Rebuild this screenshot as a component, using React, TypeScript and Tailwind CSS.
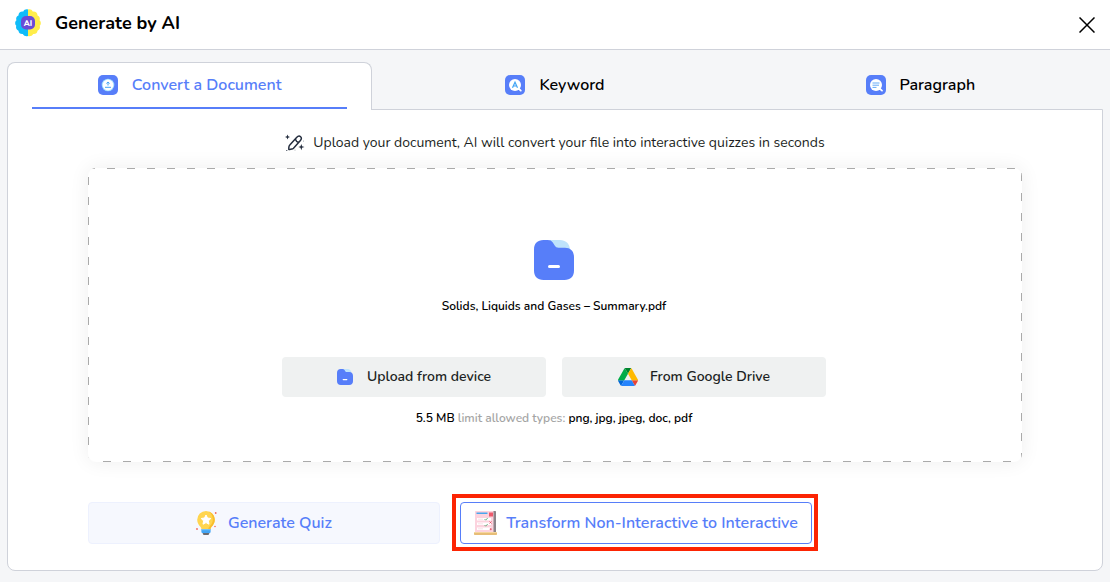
import { useState } from 'react'
import type { ReactNode } from 'react'

type IconProps = {
  className?: string
}

function BrainIcon() {
  return (
    <svg viewBox="0 0 26 28" className="h-7 w-[26px]" aria-hidden="true">
      <path
        d="M13 .5C11 0 9 .7 8.300 2.500 5.500 2 3.300 4 3.500 6.500 1.500 7.300.600 9.300 1.500 11.300-.300 12.800-.200 15.500 1.300 16.800.500 19 1.500 21 3.500 21.700 3.700 24 5.500 25.300 7.800 25 9 27 11 27.700 13 27z"
        fill="#0fbcf9"
      />
      <path
        d="M13 .5c2-.5 4 .2 4.700 2 2.800-.5 5 1.500 4.800 4 2 .8 2.900 2.800 2 4.800 1.800 1.500 1.700 4.200.2 5.500.8 2.200-.2 4.200-2.200 4.900-.2 2.300-2 3.600-4.300 3.300-1.200 2-3.200 2.700-5.200 2z"
        fill="#ffed4a"
      />
      <rect x="6" y="7" width="14" height="13.500" rx="5" fill="#6a4bd6" />
      <text
        x="13"
        y="17"
        textAnchor="middle"
        fontSize="8"
        fontWeight="800"
        fill="#fff"
        fontFamily="Nunito, Open Sans, sans-serif"
      >
        AI
      </text>
    </svg>
  )
}

function UploadBadge() {
  return (
    <svg viewBox="0 0 20 20" className="size-5" aria-hidden="true">
      <rect width="20" height="20" rx="5" fill="#577ef9" />
      <circle cx="10" cy="10" r="6.300" fill="#9edcff" />
      <circle cx="10" cy="10" r="5.400" fill="#fff" />
      <path
        d="M10 10.500V7.200M8.400 8.500 10 7l1.600 1.500M7 12.300h6"
        stroke="#43a4f5"
        strokeWidth="1"
        fill="none"
      />
    </svg>
  )
}

function KeywordBadge() {
  return (
    <svg viewBox="0 0 20 20" className="size-5" aria-hidden="true">
      <rect width="20" height="20" rx="5" fill="#577ef9" />
      <path d="m13 13 2.800 2.600" stroke="#fff" strokeWidth="1.800" strokeLinecap="round" />
      <circle cx="10" cy="10" r="6" fill="#fff" />
      <path
        d="M7.500 12.800 10 7.200l2.500 5.600M8.400 11h3.200"
        stroke="#43a4f5"
        strokeWidth="1.200"
        fill="none"
      />
    </svg>
  )
}

function ParagraphBadge() {
  return (
    <svg viewBox="0 0 20 20" className="size-5" aria-hidden="true">
      <rect width="20" height="20" rx="5" fill="#577ef9" />
      <path d="m13 13 3 2.600" stroke="#fff" strokeWidth="1.800" strokeLinecap="round" />
      <circle cx="10" cy="10" r="6" fill="#fff" />
      <path d="M6.500 8h7M6.500 10.200h6.500M6.500 12.400h4" stroke="#65a9f7" strokeWidth="1" />
    </svg>
  )
}

function MagicPenIcon() {
  return (
    <svg viewBox="0 0 20 18" className="h-[18px] w-5" fill="none" aria-hidden="true">
      <path
        d="m4.800 11 6.800-7.500c1.700-1.900 3.100-1.600 4-.8s1.300 2.200-.4 4.100L8.500 14.200c-.5.500-1 .8-1.700.9l-2.200.5c-.6.100-1-.3-.9-.9l.3-2.200c.1-.6.400-1.100.8-1.500zM10.500 5c.3 2 1.600 3.200 3.400 3.500"
        stroke="#232c3d"
        strokeWidth="1.500"
      />
      <path
        d="M2.500.5 3.200 2.300 5 3l-1.800.700L2.500 5.500l-.7-1.800L0 3l1.800-.7zM16.300 10l.8 2.200 2.400.8-2.400.8-.8 2.400-.8-2.400-2.200-.8 2.200-.8z"
        fill="#232c3d"
      />
      <circle cx="1.800" cy="16.500" r=".6" fill="#232c3d" />
      <circle cx="18.500" cy="7" r=".5" fill="#8c929c" />
      <circle cx="10" cy="16" r=".5" fill="#8c929c" />
    </svg>
  )
}

function FolderIcon({ className }: IconProps) {
  return (
    <svg viewBox="0 0 40 40" className={className} aria-hidden="true">
      <path d="M15 0h11c5.500 0 9.500 3.500 10 9.500L20 12z" fill="#bfe3fb" />
      <path
        d="M0 9.500C0 3.500 3.500 0 9.500 0h4.300c2.300 0 3.800.8 5 2.600l1.900 3c1 1.600 2 2.200 3.800 2.200H31c5.500 0 9 3.500 9 9.200v13.500c0 6-3.500 9.500-9.500 9.500h-21C3.500 40 0 36.500 0 30.500z"
        fill="#577ef9"
      />
      <rect x="14" y="25" width="12" height="3" rx="1.500" fill="#fff" />
    </svg>
  )
}

function DriveIcon() {
  return (
    <svg viewBox="0 0 87.3 78" className="h-[18px] w-5" aria-hidden="true">
      <path
        d="m6.600 66.850 3.850 6.650c.8 1.400 1.950 2.500 3.300 3.300l13.750-23.800H0c0 1.550.4 3.100 1.200 4.500z"
        fill="#0066da"
      />
      <path
        d="M43.650 25 29.900 1.200c-1.350.8-2.500 1.900-3.300 3.300L1.200 48.500C.4 49.900 0 51.450 0 53h27.500z"
        fill="#00ac47"
      />
      <path
        d="M73.550 76.800c1.350-.8 2.500-1.900 3.300-3.300l1.600-2.750 7.650-13.250c.8-1.400 1.200-2.950 1.200-4.500H59.800l5.850 11.500z"
        fill="#ea4335"
      />
      <path
        d="M43.650 25 57.400 1.200C56.050.4 54.500 0 52.900 0H34.400c-1.600 0-3.150.45-4.500 1.200z"
        fill="#00832d"
      />
      <path
        d="M59.800 53H27.500L13.750 76.800c1.350.8 2.900 1.200 4.500 1.200h50.800c1.600 0 3.150-.45 4.500-1.200z"
        fill="#2684fc"
      />
      <path
        d="M73.400 26.500 60.700 4.500c-.8-1.400-1.950-2.500-3.300-3.300L43.650 25 59.800 53h27.450c0-1.550-.4-3.100-1.200-4.500z"
        fill="#ffba00"
      />
    </svg>
  )
}

function BulbIcon() {
  return (
    <svg viewBox="0 0 22 24" className="h-6 w-[22px]" aria-hidden="true">
      <path
        d="M10 0a8.800 8.800 0 0 0-8.800 8.800c0 3.400 1.700 5.200 3.200 7 .8.900 1 1.700 1 2.700h9.200c0-1 .2-1.800 1-2.700 1.500-1.800 3.200-3.600 3.200-7A8.800 8.800 0 0 0 10 0z"
        fill="#ffd54f"
      />
      <path
        d="M12.500.4c4 1.200 6.300 4.500 6.300 8.400 0 3.400-1.700 5.200-3.200 7-.8.900-1 1.700-1 2.700h-2.400c0-3 4.600-4.700 4.600-9.700 0-3.700-1.500-6.500-4.300-8.400z"
        fill="#f9bd2e"
      />
      <path
        d="m10 4 1.500 3 3.300.5-2.400 2.400.6 3.300-3-1.600-3 1.600.6-3.300-2.400-2.400 3.300-.5z"
        fill="#fff"
        stroke="#fff"
        strokeLinejoin="round"
      />
      <path d="M5.400 18.200h9.200v2.500c0 .8-.5 1.300-1.300 1.300H6.700c-.8 0-1.300-.5-1.300-1.300z" fill="#42a5f5" />
      <path d="M5.400 18.200h9.200v1H5.400z" fill="#7cc4fb" />
      <path d="M6.500 22h7l-1 2h-5z" fill="#6b6b70" />
      <circle cx="19.700" cy="2" r=".9" fill="#f4685c" />
      <circle cx="19" cy="15.500" r=".8" fill="#f4685c" />
      <circle cx="1" cy="18" r=".9" fill="#f4685c" />
    </svg>
  )
}

function WorksheetIcon() {
  return (
    <svg viewBox="0 0 24 24" className="size-6" aria-hidden="true">
      <path d="M19 0h2c.6 0 1 .4 1 1v20h-3z" fill="#8c8389" />
      <path d="M1 1c0-.6.400-1 1-1h17.500v21H1z" fill="#fcd3de" />
      <path d="M2.500 1.500h11V3h-11z" fill="#48a6ee" />
      <rect x="15" y="1.500" width="4" height="4" fill="#ee5a6c" />
      <path d="M3 7h14v2.500H3zM3 11.500h14V14H3zM3 16.500h14V19H3z" fill="#fff" />
      <path d="M4 8.200h5M4 12.800h5M4 17.800h5" stroke="#f0cfd9" strokeWidth=".6" />
      <path
        d="m10.500 8 1.200 1.200 2-2.200M10.500 14l1.200 1.200 2-2.200"
        stroke="#62ad7c"
        strokeWidth=".9"
        fill="none"
      />
      <path d="m15.500 10.500 2 2m0-2-2 2M15.700 18.200h2m-1-1v2" stroke="#e94f64" strokeWidth=".9" />
      <path d="M0 21h23v2c0 .6-.4 1-1 1H1c-.6 0-1-.4-1-1z" fill="#e7bd77" />
      <path d="M0 21h23v1H0z" fill="#f5d69e" />
    </svg>
  )
}

type TabProps = {
  icon: ReactNode
  label: string
  active: boolean
  onSelect: () => void
}

function Tab(props: TabProps) {
  const { icon, label, active, onSelect } = props
  return (
    <button
      type="button"
      role="tab"
      aria-selected={active}
      onClick={onSelect}
      className={
        active
          ? 'relative z-10 -mb-px flex h-12 w-1/3 rounded-t-lg border border-b-0 border-[#cfd2da] bg-white px-6 text-[#577ef9]'
          : 'flex h-[47px] w-1/3 px-6 text-black'
      }
    >
      <span
        className={
          active
            ? 'flex h-[46px] w-full items-center justify-center gap-3.5 border-b-2 border-[#577ef9]'
            : 'flex h-[46px] w-full items-center justify-center gap-3.5'
        }
      >
        {icon}
        <span className="text-base font-semibold">{label}</span>
      </span>
    </button>
  )
}

const tabs = [
  { label: 'Convert a Document', icon: <UploadBadge /> },
  { label: 'Keyword', icon: <KeywordBadge /> },
  { label: 'Paragraph', icon: <ParagraphBadge /> },
]

export default function App() {
  const [activeTab, setActiveTab] = useState(0)

  return (
    <div className="min-h-screen bg-[#f5f6f8] font-['Nunito','Open_Sans',sans-serif]">
      <header className="flex h-[50px] items-center justify-between border-b border-[#cfd2da] bg-white px-[15px]">
        <div className="flex items-center gap-3.5 pb-1">
          <BrainIcon />
          <h1 className="text-lg font-bold text-black">Generate by AI</h1>
        </div>
        <button type="button" aria-label="Close" className="text-black">
          <svg viewBox="0 0 16 16" className="size-4" aria-hidden="true">
            <path d="m.5.500 15 15m0-15-15 15" stroke="currentColor" strokeWidth="1.500" />
          </svg>
        </button>
      </header>

      <main className="px-[7px] pt-3 pb-3">
        <div role="tablist" className="flex">
          {tabs.map((tab, index) => (
            <Tab
              key={tab.label}
              icon={tab.icon}
              label={tab.label}
              active={index === activeTab}
              onSelect={() => setActiveTab(index)}
            />
          ))}
        </div>

        <section className="rounded-b-lg border border-[#cfd2da] bg-white px-20 pt-5 pb-[26px]">
          <div className="flex h-[26px] items-center justify-center gap-2">
            <MagicPenIcon />
            <p className="text-sm text-[#1c1f23]">
              Upload your document, AI will convert your file into interactive quizzes in seconds
            </p>
          </div>

          <div className="mt-3 flex h-[294px] flex-col items-center rounded-lg bg-white bg-[linear-gradient(90deg,#aaa_40%,transparent_40%),linear-gradient(90deg,#aaa_40%,transparent_40%),linear-gradient(#aaa_40%,transparent_40%),linear-gradient(#aaa_40%,transparent_40%)] [background-position:-1px_0,15px_100%,0_9px,100%_5px] [background-repeat:repeat-x,repeat-x,repeat-y,repeat-y] [background-size:20px_1px,20px_1px,1px_20px,1px_20px] pt-18 pr-0.5 shadow-[0_0_20px_rgba(0,0,0,0.07)]">
            <FolderIcon className="size-10" />
            <p className="mt-4 text-xs leading-5 font-semibold text-black">
              Solids, Liquids and Gases – Summary.pdf
            </p>
            <div className="mt-[41px] flex gap-4">
              <button
                type="button"
                className="flex h-10 w-66 items-center justify-center gap-3.5 rounded bg-[#eff1f1] text-sm font-semibold text-[#1c1f23]"
              >
                <FolderIcon className="size-4" />
                Upload from device
              </button>
              <button
                type="button"
                className="flex h-10 w-66 items-center justify-center gap-3 rounded bg-[#eff1f1] text-sm font-semibold text-[#1c1f23]"
              >
                <DriveIcon />
                From Google Drive
              </button>
            </div>
            <p className="mt-[11px] text-xs leading-5 font-semibold text-[#a5a5a5]">
              <span className="text-black">5.5 MB</span> limit allowed types:{' '}
              <span className="text-black">png, jpg, jpeg, doc, pdf</span>
            </p>
          </div>

          <div className="mt-10 flex gap-5">
            <button
              type="button"
              className="flex h-[42px] w-88 items-center justify-center gap-2.5 rounded border border-[#edf1fe] bg-[#f6f8fe] text-base font-semibold text-[#577ef9]"
            >
              <BulbIcon />
              Generate Quiz
            </button>
            <div className="relative">
              <button
                type="button"
                className="flex h-[42px] w-88 items-center justify-center gap-2 rounded border border-[#577ef9] bg-white text-base font-semibold text-[#577ef9]"
              >
                <WorksheetIcon />
                Transform Non-Interactive to Interactive
              </button>
              <div className="pointer-events-none absolute -top-2 -right-1.5 -bottom-[7px] -left-2 border-4 border-[#fc2403]" />
            </div>
          </div>
        </section>
      </main>
    </div>
  )
}
